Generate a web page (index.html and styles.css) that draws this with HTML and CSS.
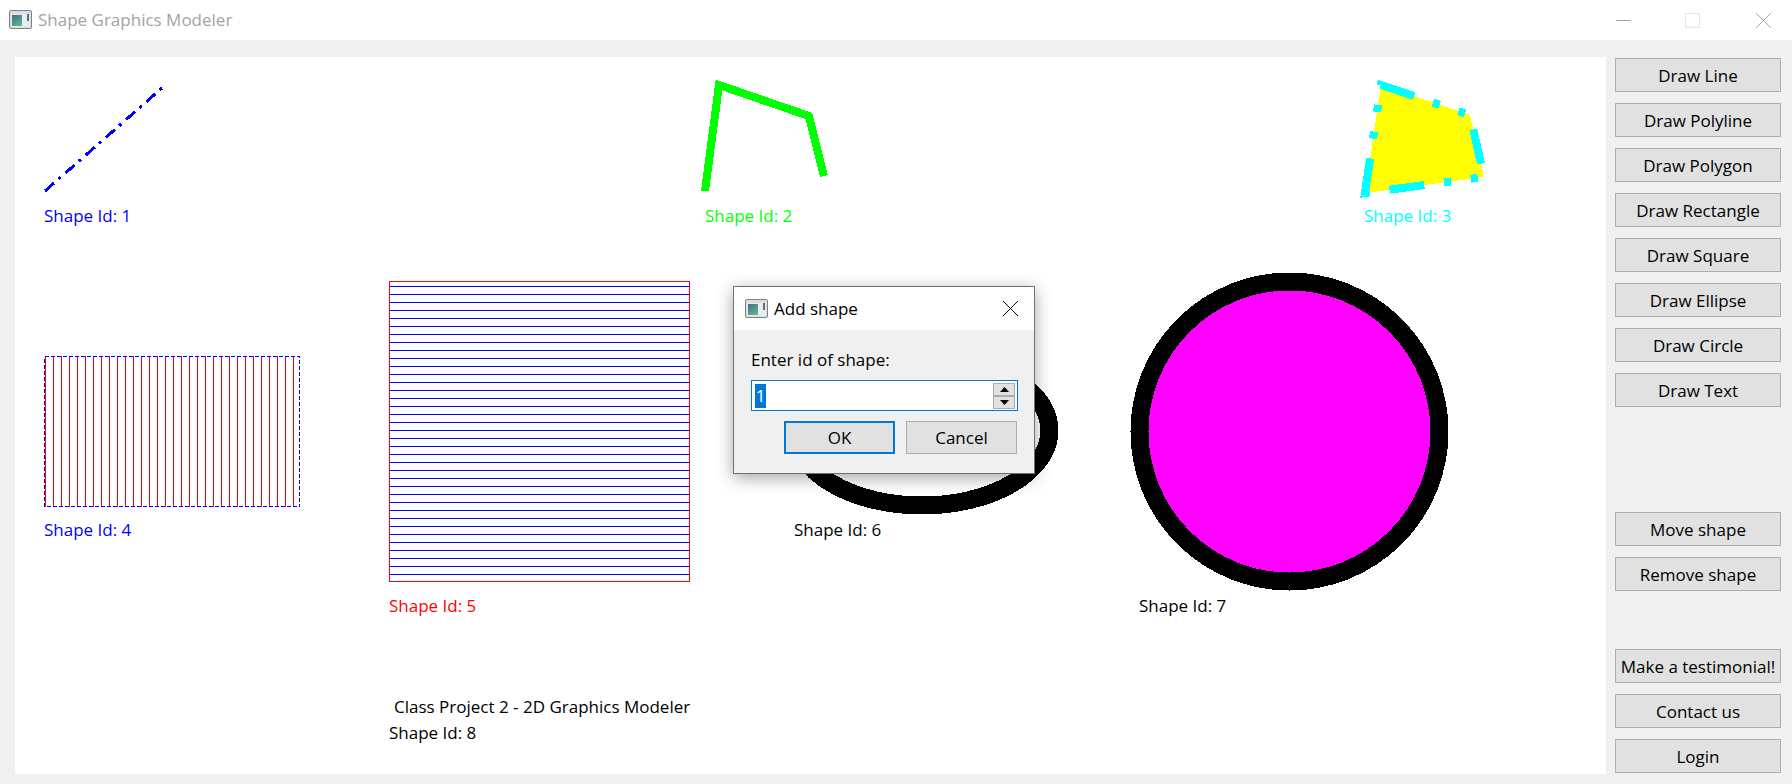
FILE: index.html
```html
<!DOCTYPE html>
<html lang="en">
<head>
    <meta charset="UTF-8">
    <title>Shape Graphics Modeler</title>
    <link rel="stylesheet" href="styles.css">
</head>
<body>
    <div class="window">
        <div class="titlebar">
            <svg class="app-icon" viewBox="0 0 24 20">
                <defs>
                    <linearGradient id="iconFill" x1="0" y1="0" x2="0.6" y2="1">
                        <stop offset="0" stop-color="#3f6f8f"/>
                        <stop offset="1" stop-color="#5fae8c"/>
                    </linearGradient>
                </defs>
                <rect x="0.5" y="0.5" width="22" height="18" rx="1.5" fill="#d9dde0" stroke="#7d8488"/>
                <rect x="2" y="4" width="19" height="13" fill="#e8eceb"/>
                <rect x="3" y="5" width="10" height="11" fill="url(#iconFill)"/>
                <rect x="18" y="4" width="2" height="7" fill="#5d6d70"/>
            </svg>
            <span class="window-title">Shape Graphics Modeler</span>
            <div class="window-controls">
                <svg class="control" viewBox="0 0 15 15"><path d="M0 7.5H15" stroke="#a6a6a6" fill="none"/></svg>
                <svg class="control" viewBox="0 0 15 15"><rect x="0.5" y="0.5" width="14" height="14" stroke="#e6e6e6" fill="none"/></svg>
                <svg class="control close" viewBox="0 0 15 15"><path d="M0 0L15 15M15 0L0 15" stroke="#a6a6a6" fill="none"/></svg>
            </div>
        </div>

        <div class="main">
            <svg class="canvas" viewBox="0 0 1591 717">
                <defs>
                    <pattern id="vlines" x="1" y="0" width="8" height="151" patternUnits="userSpaceOnUse">
                        <rect x="0" y="0" width="1" height="151" fill="#ff0000"/>
                    </pattern>
                    <pattern id="hlines" x="0" y="5" width="301" height="8" patternUnits="userSpaceOnUse">
                        <rect x="0" y="0" width="301" height="1" fill="#0000ff"/>
                    </pattern>
                </defs>

                <g transform="translate(-15 -57)">
                    <!-- shape 1: line -->
                    <path class="crisp" d="M45 191L162 88" stroke="#0000ff" stroke-width="3" stroke-dasharray="12 6 3 6" fill="none"/>
                    <text class="label blue" x="44" y="222">Shape Id: 1</text>

                    <!-- shape 2: polyline -->
                    <path class="crisp" d="M705 191L719 85L809 116L824 176" stroke="#00ff00" stroke-width="8" fill="none"/>
                    <text class="label green" x="705" y="222">Shape Id: 2</text>

                    <!-- shape 3: polygon -->
                    <path class="crisp" d="M1365 193L1381 85L1470 115L1484 177Z" fill="#ffff00" stroke="#00ffff" stroke-width="8" stroke-dasharray="35 20 7 20 7 20"/>
                    <text class="label cyan" x="1364" y="222">Shape Id: 3</text>

                    <!-- shape 4: rectangle -->
                    <g transform="translate(44 356)">
                        <rect width="256" height="151" fill="url(#vlines)"/>
                        <rect class="crisp" x="0.5" y="0.5" width="255" height="150" fill="none" stroke="#0000ff" stroke-dasharray="4 2"/>
                    </g>
                    <text class="label blue" x="44" y="536">Shape Id: 4</text>

                    <!-- shape 5: square -->
                    <g transform="translate(389 281)">
                        <rect width="301" height="301" fill="url(#hlines)"/>
                        <rect x="0.5" y="0.5" width="300" height="300" fill="none" stroke="#ff0000"/>
                    </g>
                    <text class="label red" x="389" y="612">Shape Id: 5</text>

                    <!-- shape 6: ellipse -->
                    <ellipse class="crisp" cx="922" cy="430.5" rx="127.5" ry="75" fill="none" stroke="#000" stroke-width="18"/>
                    <text class="label" x="794" y="536">Shape Id: 6</text>

                    <!-- shape 7: circle -->
                    <circle class="crisp" cx="1289.5" cy="431.5" r="150" fill="#ff00ff" stroke="#000" stroke-width="18"/>
                    <text class="label" x="1139" y="612">Shape Id: 7</text>

                    <!-- shape 8: text -->
                    <text class="label" x="394" y="713">Class Project 2 - 2D Graphics Modeler</text>
                    <text class="label" x="389" y="739">Shape Id: 8</text>
                </g>
            </svg>

            <div class="sidebar">
                <div class="button-group">
                    <button type="button" class="side-button">Draw Line</button>
                    <button type="button" class="side-button">Draw Polyline</button>
                    <button type="button" class="side-button">Draw Polygon</button>
                    <button type="button" class="side-button">Draw Rectangle</button>
                    <button type="button" class="side-button">Draw Square</button>
                    <button type="button" class="side-button">Draw Ellipse</button>
                    <button type="button" class="side-button">Draw Circle</button>
                    <button type="button" class="side-button">Draw Text</button>
                </div>
                <div class="button-group shape-actions">
                    <button type="button" class="side-button">Move shape</button>
                    <button type="button" class="side-button">Remove shape</button>
                </div>
                <div class="button-group account-actions">
                    <button type="button" class="side-button">Make a testimonial!</button>
                    <button type="button" class="side-button">Contact us</button>
                    <button type="button" class="side-button">Login</button>
                </div>
            </div>
        </div>

        <div class="dialog">
            <div class="dialog-title">
                <svg class="app-icon" viewBox="0 0 24 20">
                    <rect x="0.5" y="0.5" width="22" height="18" rx="1.5" fill="#d9dde0" stroke="#7d8488"/>
                    <rect x="2" y="4" width="19" height="13" fill="#e8eceb"/>
                    <rect x="3" y="5" width="10" height="11" fill="url(#iconFill)"/>
                    <rect x="18" y="4" width="2" height="7" fill="#5d6d70"/>
                </svg>
                <span class="dialog-name">Add shape</span>
                <svg class="dialog-close" viewBox="0 0 15 15"><path d="M0 0L15 15M15 0L0 15" stroke="#000" fill="none"/></svg>
            </div>
            <div class="dialog-body">
                <div class="dialog-label">Enter id of shape:</div>
                <div class="spinbox">
                    <span class="spin-value">1</span>
                    <div class="spin-buttons">
                        <div class="spin-button"><svg viewBox="0 0 9 5"><path d="M4.5 0L9 5H0Z"/></svg></div>
                        <div class="spin-button"><svg viewBox="0 0 9 5"><path d="M0 0H9L4.5 5Z"/></svg></div>
                    </div>
                </div>
                <div class="dialog-buttons">
                    <button type="button" class="dialog-button default">OK</button>
                    <button type="button" class="dialog-button">Cancel</button>
                </div>
            </div>
        </div>
    </div>
</body>
</html>
```

FILE: styles.css
```css
body {
    margin: 0;
    background-color: #f0f0f0;
    font-family: 'Open Sans', 'Noto Sans', sans-serif;
    font-size: 17px;
    color: #000;
}

.window {
    position: relative;
    width: 1792px;
    height: 784px;
    overflow: hidden;
}

.titlebar {
    display: flex;
    align-items: center;
    height: 40px;
    padding-left: 9px;
    background-color: #fff;
}

.app-icon {
    width: 24px;
    height: 20px;
    flex-shrink: 0;
}

.window-title {
    margin-left: 5px;
    margin-bottom: 2px;
    font-size: 17px;
    color: #a3a3a3;
}

.window-controls {
    display: flex;
    gap: 54px;
    margin-left: auto;
    padding-right: 21px;
}

.control {
    width: 15px;
    height: 15px;
}

.control.close {
    margin-left: 2px;
}

.main {
    display: flex;
    padding: 17px 11px 0 15px;
}

.canvas {
    display: block;
    width: 1591px;
    height: 717px;
    background-color: #fff;
}

.crisp {
    shape-rendering: crispEdges;
}

.label {
    font-family: 'Open Sans', 'Noto Sans', sans-serif;
    font-size: 17px;
    fill: #000;
}

.blue {
    fill: #0000ff;
}

.green {
    fill: #00ff00;
}

.cyan {
    fill: #00ffff;
}

.red {
    fill: #ff0000;
}

.sidebar {
    display: flex;
    flex-direction: column;
    width: 166px;
    margin-left: 9px;
    padding-top: 1px;
}

.button-group {
    display: flex;
    flex-direction: column;
    gap: 11px;
}

.shape-actions {
    margin-top: 105px;
}

.account-actions {
    margin-top: 58px;
}

.side-button {
    height: 34px;
    padding: 0;
    font-family: inherit;
    font-size: 17px;
    color: #000;
    background-color: #e1e1e1;
    border: 1px solid #adadad;
    white-space: nowrap;
}

.dialog {
    position: absolute;
    left: 733px;
    top: 286px;
    width: 300px;
    height: 186px;
    background-color: #f0f0f0;
    border: 1px solid #707070;
    box-shadow: 0 4px 16px rgba(0, 0, 0, 0.35);
}

.dialog-title {
    display: flex;
    align-items: center;
    height: 43px;
    padding: 0 16px 0 11px;
    background-color: #fff;
}

.dialog-name {
    margin-left: 5px;
    font-size: 17px;
}

.dialog-close {
    width: 15px;
    height: 15px;
    margin-left: auto;
}

.dialog-body {
    padding: 20px 16px 0 17px;
}

.dialog-label {
    height: 20px;
    line-height: 20px;
}

.spinbox {
    display: flex;
    align-items: center;
    justify-content: space-between;
    height: 31px;
    margin-top: 10px;
    padding: 0 2px 0 3px;
    background-color: #fff;
    border: 1px solid #0078d7;
    box-sizing: border-box;
}

.spin-value {
    width: 11px;
    height: 24px;
    line-height: 24px;
    text-align: center;
    color: #fff;
    background-color: #0078d7;
}

.spin-buttons {
    display: flex;
    flex-direction: column;
    width: 22px;
}

.spin-button {
    display: flex;
    align-items: center;
    justify-content: center;
    height: 11px;
    background-color: #e1e1e1;
    border: 1px solid #adadad;
}

.spin-button svg {
    width: 9px;
    height: 5px;
}

.dialog-buttons {
    display: flex;
    justify-content: flex-end;
    gap: 11px;
    margin-top: 10px;
    padding-right: 1px;
}

.dialog-button {
    width: 111px;
    height: 33px;
    padding: 0;
    font-family: inherit;
    font-size: 17px;
    color: #000;
    background-color: #e1e1e1;
    border: 1px solid #adadad;
}

.dialog-button.default {
    border: 2px solid #0078d7;
}
```
